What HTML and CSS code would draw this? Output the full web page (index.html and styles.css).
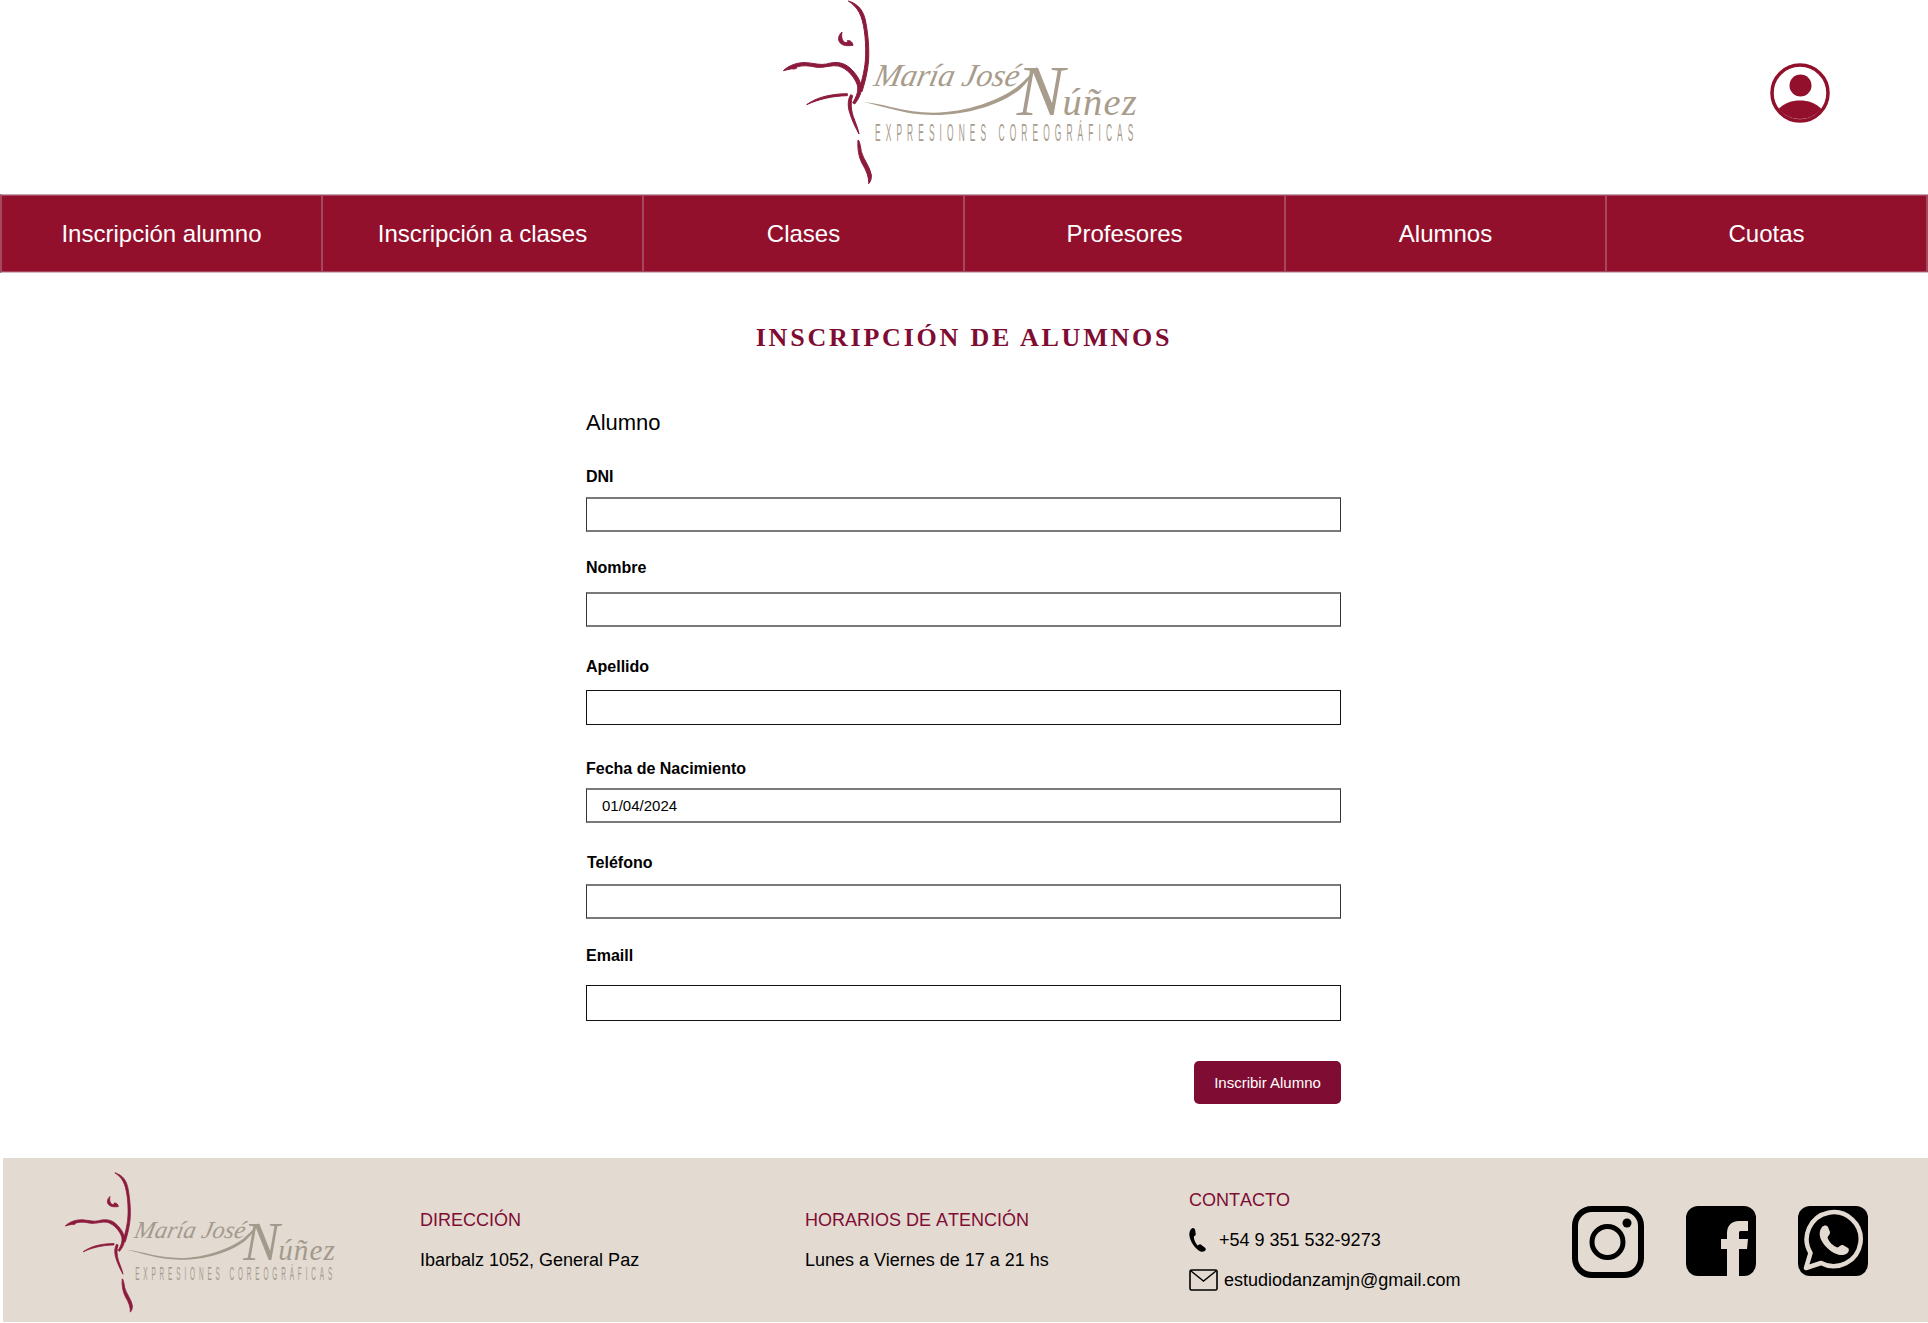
FILE: index.html
```html
<!DOCTYPE html>
<html lang="es">
<head>
    <meta charset="UTF-8">
    <meta name="viewport" content="width=device-width, initial-scale=1.0">
    <title>Inscripción de alumnos</title>
    <link rel="stylesheet" href="styles.css">
</head>
<body>
    <header class="site-header">
        <svg class="logo-main" viewBox="0 0 1200 582">
            <g class="logo-dancer">
                <path d="M265 3 C295 12 312 32 318 70 C326 115 330 170 322 210 C318 235 312 255 306 275 L298 268 C306 240 316 205 317 165 C318 115 312 65 298 38 C290 22 278 12 265 3 Z"/>
                <path d="M70 212 C85 198 110 186 140 188 C165 190 180 196 200 192 C225 184 250 186 270 204 C288 220 300 240 304 258 C306 275 298 295 284 312 L278 308 C290 290 296 272 292 255 C284 232 262 205 235 198 C215 194 195 204 170 202 C150 198 130 194 108 202 C115 206 100 208 96 206 C88 208 78 210 70 212 Z"/>
                <path d="M140 314 C165 296 200 282 262 281 L262 287 C215 288 175 298 140 314 Z"/>
                <path d="M272 284 L278 287 C272 305 272 325 280 350 C288 372 294 385 297 402 C288 385 276 362 269 338 C262 315 264 298 272 284 Z"/>
                <path d="M294 420 C298 420 302 440 304 455 C310 478 330 500 334 525 C335 535 332 545 326 551 C327 530 318 510 306 490 C296 470 292 445 294 420 Z"/>
                <path d="M246 96 C236 105 232 118 240 128 C248 138 264 138 279 136 C278 128 272 120 262 122 C266 128 256 130 250 124 C244 116 244 106 246 96 Z"/>
            </g>
            <g class="logo-brand">
                <path d="M310 306 C380 312 430 338 520 338 C620 338 720 300 770 262 C795 242 815 220 832 198 C820 225 800 250 778 270 C720 315 620 346 520 345 C430 344 370 318 310 306 Z"/>
                <text class="logo-name" transform="translate(338 258) skewX(-12)">María José</text>
                <text class="logo-surname" x="770" y="345"><tspan class="logo-initial">N</tspan><tspan dx="-10">úñez</tspan></text>
                <text class="logo-sub" transform="translate(345 423) scale(.36 1)" textLength="2153" lengthAdjust="spacing">EXPRESIONES COREOGRÁFICAS</text>
            </g>
        </svg>
        <a class="user-link" href="#" aria-label="Usuario">
            <svg width="60" height="60" viewBox="0 0 60 60">
                <circle cx="30" cy="30" r="28" fill="none" stroke="#93102d" stroke-width="3.5"/>
                <circle cx="30.5" cy="22.5" r="11" fill="#93102d"/>
                <path d="M8.5 46 C14 40 22 37.5 30 37.5 C38 37.5 46 40 51.5 46 A28 28 0 0 1 8.5 46 Z" fill="#93102d"/>
            </svg>
        </a>
    </header>

    <nav class="main-nav">
        <a href="#">Inscripción alumno</a>
        <a href="#">Inscripción a clases</a>
        <a href="#">Clases</a>
        <a href="#">Profesores</a>
        <a href="#">Alumnos</a>
        <a href="#">Cuotas</a>
    </nav>

    <main class="content">
        <h1 class="page-title">Inscripción de alumnos</h1>

        <form class="student-form">
            <h2 class="form-section">Alumno</h2>

            <div class="field field-dni">
                <label for="dni">DNI</label>
                <input type="text" id="dni">
            </div>
            <div class="field field-nombre">
                <label for="nombre">Nombre</label>
                <input type="text" id="nombre">
            </div>
            <div class="field field-apellido">
                <label for="apellido">Apellido</label>
                <input type="text" id="apellido">
            </div>
            <div class="field field-fecha">
                <label for="fecha">Fecha de Nacimiento</label>
                <input type="text" id="fecha" value="01/04/2024">
            </div>
            <div class="field field-telefono">
                <label for="telefono">Teléfono</label>
                <input type="text" id="telefono">
            </div>
            <div class="field field-email">
                <label for="email">Emaill</label>
                <input type="text" id="email">
            </div>

            <div class="form-actions">
                <button type="button" class="btn-submit">Inscribir Alumno</button>
            </div>
        </form>
    </main>

    <footer class="site-footer">
        <svg class="logo-footer" viewBox="0 0 1200 582">
            <g class="logo-dancer">
                <path d="M265 3 C295 12 312 32 318 70 C326 115 330 170 322 210 C318 235 312 255 306 275 L298 268 C306 240 316 205 317 165 C318 115 312 65 298 38 C290 22 278 12 265 3 Z"/>
                <path d="M70 212 C85 198 110 186 140 188 C165 190 180 196 200 192 C225 184 250 186 270 204 C288 220 300 240 304 258 C306 275 298 295 284 312 L278 308 C290 290 296 272 292 255 C284 232 262 205 235 198 C215 194 195 204 170 202 C150 198 130 194 108 202 C115 206 100 208 96 206 C88 208 78 210 70 212 Z"/>
                <path d="M140 314 C165 296 200 282 262 281 L262 287 C215 288 175 298 140 314 Z"/>
                <path d="M272 284 L278 287 C272 305 272 325 280 350 C288 372 294 385 297 402 C288 385 276 362 269 338 C262 315 264 298 272 284 Z"/>
                <path d="M294 420 C298 420 302 440 304 455 C310 478 330 500 334 525 C335 535 332 545 326 551 C327 530 318 510 306 490 C296 470 292 445 294 420 Z"/>
                <path d="M246 96 C236 105 232 118 240 128 C248 138 264 138 279 136 C278 128 272 120 262 122 C266 128 256 130 250 124 C244 116 244 106 246 96 Z"/>
            </g>
            <g class="logo-brand">
                <path d="M310 306 C380 312 430 338 520 338 C620 338 720 300 770 262 C795 242 815 220 832 198 C820 225 800 250 778 270 C720 315 620 346 520 345 C430 344 370 318 310 306 Z"/>
                <text class="logo-name" transform="translate(338 258) skewX(-12)">María José</text>
                <text class="logo-surname" x="770" y="345"><tspan class="logo-initial">N</tspan><tspan dx="-10">úñez</tspan></text>
                <text class="logo-sub" transform="translate(345 423) scale(.36 1)" textLength="2153" lengthAdjust="spacing">EXPRESIONES COREOGRÁFICAS</text>
            </g>
        </svg>

        <div class="footer-col">
            <h3>DIRECCIÓN</h3>
            <p>Ibarbalz 1052, General Paz</p>
        </div>
        <div class="footer-col">
            <h3>HORARIOS DE ATENCIÓN</h3>
            <p>Lunes a Viernes de 17 a 21 hs</p>
        </div>
        <div class="footer-col footer-contact">
            <h3>CONTACTO</h3>
            <p class="contact-phone">
                <svg width="18" height="24" viewBox="0 0 20 24" preserveAspectRatio="none"><path d="M4 0 C6 0 7 1 7 3 L7.5 6 C7.5 7.5 6 8 5.5 8.5 C5 11 7 15 9.5 17.5 C10.5 17.5 11.5 15.8 13 16.5 L17.5 19.5 C19 20.5 19 22 17.5 23 C15.5 24.2 12.5 24 10 22 C5 18.5 1.5 13 0.5 8 C0 4.5 1 1 4 0 Z" fill="#000"/></svg>
                <span>+54 9 351 532-9273</span>
            </p>
            <p class="contact-mail">
                <svg width="29" height="22" viewBox="0 0 29 22"><rect x="1" y="1" width="27" height="20" rx="1.5" fill="none" stroke="#000" stroke-width="1.6"/><path d="M2 2 L14.5 12 L27 2" fill="none" stroke="#000" stroke-width="1.4"/></svg>
                <span>estudiodanzamjn@gmail.com</span>
            </p>
        </div>

        <div class="social">
            <a href="#" aria-label="Instagram">
                <svg width="72" height="72" viewBox="0 0 72 72">
                    <rect x="3" y="3" width="66" height="66" rx="17" fill="none" stroke="#000" stroke-width="6"/>
                    <circle cx="35.5" cy="36" r="15.5" fill="none" stroke="#000" stroke-width="5"/>
                    <circle cx="55" cy="17" r="4.5" fill="#000"/>
                </svg>
            </a>
            <a href="#" aria-label="Facebook">
                <svg width="70" height="70" viewBox="0 0 70 70">
                    <path d="M12 0 H58 A12 12 0 0 1 70 12 V58 A12 12 0 0 1 58 70 H53 V43 H61 L62 33 H53 V27 C53 25 54 25 56 25 H62 V15 C59 15 56 15 53 15 C45 15 41 20 41 27 V33 H35 V43 H41 V70 H12 A12 12 0 0 1 0 58 V12 A12 12 0 0 1 12 0 Z" fill="#000"/>
                </svg>
            </a>
            <a href="#" aria-label="WhatsApp">
                <svg width="70" height="70" viewBox="0 0 70 70">
                    <rect width="70" height="70" rx="12" fill="#000"/>
                    <path d="M8 62 L12.5 47 A27 27 0 1 1 23 57 Z" fill="none" stroke="#e3dbd2" stroke-width="4.5" stroke-linejoin="round"/>
                    <path d="M24 21 C26 19 29 19 30 21 L32 26 C32.5 28 30 30 29.5 31.5 C31 36 35 40 39.5 41.5 C41 41 43 38.5 45 39 L50 42 C51.5 43 51 45.5 49.5 47 C46 50 41 49.5 36 47 C29 43 25 38 22.5 32.5 C21 28 21.5 24 24 21 Z" fill="#e3dbd2"/>
                </svg>
            </a>
        </div>
    </footer>
</body>
</html>
```

FILE: styles.css
```css
/* general */
body {
    --brand: #a89c8c;
    --dancer: #8c1a3c;
    margin: 0;
    font-family: "Liberation Sans", Arial, sans-serif;
    color: #000;
    background-color: #fff;
}

/* logo */
.logo-dancer {
    fill: var(--dancer);
    stroke: var(--dancer);
    stroke-width: 3px;
}

.logo-brand {
    fill: var(--brand);
}

.logo-name {
    font-family: "Liberation Serif", serif;
    font-style: italic;
    font-size: 96px;
}

.logo-surname {
    font-family: "Liberation Serif", serif;
    font-style: italic;
    font-size: 115px;
    letter-spacing: 4px;
}

.logo-initial {
    font-size: 215px;
}

.logo-sub {
    font-family: "Liberation Sans", sans-serif;
    font-size: 70px;
}

/* cabecera */
.site-header {
    display: grid;
    grid-template-columns: 760px 400px 1fr;
    height: 194px;
}

.logo-main {
    grid-column: 2;
    width: 400px;
    height: 194px;
}

.user-link {
    grid-column: 3;
    justify-self: end;
    margin: 63px 98px 0 0;
    height: 60px;
}

/* menu */
.main-nav {
    display: grid;
    grid-template-columns: repeat(6, 321px);
    height: 79px;
    box-sizing: border-box;
    background-color: #93102d;
    border-top: 1px solid #c9a3ae;
    border-bottom: 1px solid #d5bcc3;
    border-left: 2px solid #a4485f;
}

.main-nav a {
    display: flex;
    align-items: center;
    justify-content: center;
    font-size: 24px;
    color: #fff;
    text-decoration: none;
    border-top: 1px solid #a4485f;
    border-bottom: 1px solid #a4485f;
    border-right: 2px solid #a4485f;
}

/* formulario */
.content {
    padding-top: 50px;
}

.page-title {
    margin: 0;
    text-align: center;
    font-family: "Liberation Serif", serif;
    font-size: 26px;
    line-height: 30px;
    font-weight: bold;
    letter-spacing: 2.78px;
    text-transform: uppercase;
    color: #7f0c33;
}

.student-form {
    width: 755px;
    margin-left: 586px;
    padding-top: 57px;
}

.form-section {
    margin: 0;
    font-size: 22px;
    line-height: 26px;
    font-weight: normal;
}

.field label {
    display: block;
    font-size: 16px;
    line-height: 18px;
    font-weight: bold;
}

.field input {
    display: block;
    width: 100%;
    height: 35px;
    box-sizing: border-box;
    padding: 0 15px;
    font-family: "Liberation Sans", Arial, sans-serif;
    font-size: 15px;
    color: #000;
    background-color: #fff;
    border: 1px solid #111;
    border-radius: 0;
}

.field-dni input,
.field-nombre input,
.field-fecha input,
.field-telefono input {
    border-top: 2px solid #7a7a7a;
    border-bottom: 2px solid #7a7a7a;
    border-left-color: #333;
    border-right-color: #333;
}

.field-dni { margin-top: 32px; }
.field-dni label { margin-bottom: 11px; }
.field-nombre { margin-top: 27px; }
.field-nombre label { margin-bottom: 15px; }
.field-apellido { margin-top: 31px; }
.field-apellido label { margin-bottom: 14px; }
.field-fecha { margin-top: 35px; }
.field-fecha label { margin-bottom: 10px; }
.field-telefono { margin-top: 31px; }
.field-telefono label { margin-bottom: 12px; padding-left: 1px; }
.field-email { margin-top: 28px; }
.field-email label { margin-bottom: 20px; }
.field-email input { height: 36px; }

.form-actions {
    display: flex;
    justify-content: flex-end;
    margin-top: 40px;
}

.btn-submit {
    width: 147px;
    height: 43px;
    font-family: "Liberation Sans", Arial, sans-serif;
    font-size: 15px;
    color: #fff;
    background-color: #7f0c33;
    border: none;
    border-radius: 5px;
}

/* pie */
.site-footer {
    --brand: #a39a8d;
    display: grid;
    grid-template-columns: 417px 385px 384px 383px 1fr;
    height: 164px;
    margin: 54px 0 0 3px;
    background-color: #e3dbd2;
}

.logo-footer {
    width: 306px;
    height: 148px;
    margin: 14px 0 0 44px;
}

.footer-col {
    padding-top: 52px;
    font-size: 18px;
    line-height: 21px;
}

.footer-col h3 {
    margin: 0;
    font-size: 18px;
    line-height: 21px;
    font-weight: normal;
    font-kerning: none;
    color: #7f0c33;
}

.footer-col p {
    margin: 19px 0 0;
}

.footer-contact {
    padding-top: 32px;
}

.contact-phone,
.contact-mail {
    display: flex;
    align-items: center;
    height: 24px;
}

.footer-contact .contact-phone {
    gap: 12px;
    margin-top: 17px;
}

.footer-contact .contact-mail {
    gap: 6px;
    margin-top: 16px;
}

.social {
    display: flex;
    align-items: flex-start;
    gap: 42px;
    padding-top: 48px;
}

.social a {
    display: block;
    height: 72px;
}
```
